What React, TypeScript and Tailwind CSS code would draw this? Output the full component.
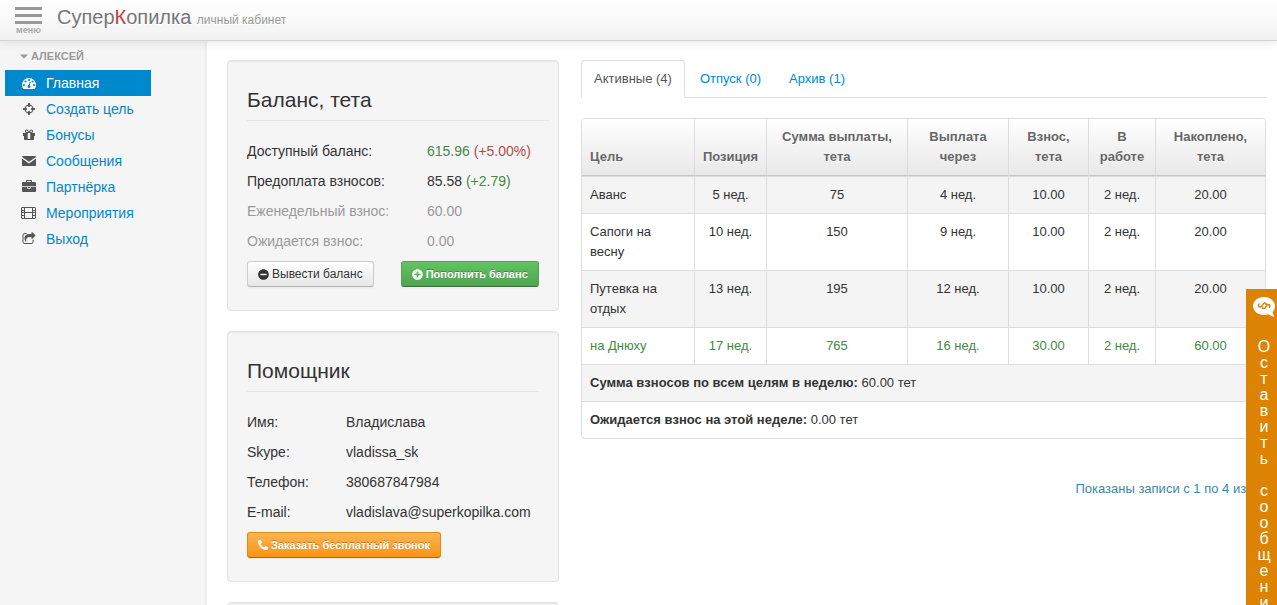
import type { ReactNode } from 'react'
import { FaCaretDown, FaMinusCircle, FaPhoneAlt, FaPlusCircle } from 'react-icons/fa'

interface Goal {
  name: string
  position: string
  payout: string
  payoutIn: string
  fee: string
  active: string
  saved: string
  done?: boolean
}

const GOALS: Goal[] = [
  { name: 'Аванс',            position: '5 нед.',  payout: '75',  payoutIn: '4 нед.',  fee: '10.00', active: '2 нед.', saved: '20.00' },
  { name: 'Сапоги на весну',  position: '10 нед.', payout: '150', payoutIn: '9 нед.',  fee: '10.00', active: '2 нед.', saved: '20.00' },
  { name: 'Путевка на отдых', position: '13 нед.', payout: '195', payoutIn: '12 нед.', fee: '10.00', active: '2 нед.', saved: '20.00' },
  { name: 'на Днюху',         position: '17 нед.', payout: '765', payoutIn: '16 нед.', fee: '30.00', active: '2 нед.', saved: '60.00', done: true },
]

const COLUMNS: { label: string; className: string }[] = [
  { label: 'Цель',                className: 'w-[112px] rounded-tl-[3px] text-left' },
  { label: 'Позиция',             className: 'w-[72px]' },
  { label: 'Сумма выплаты, тета', className: 'w-[141px]' },
  { label: 'Выплата через',       className: 'w-[101px]' },
  { label: 'Взнос, тета',         className: 'w-[80px]' },
  { label: 'В работе',            className: 'w-[67px]' },
  { label: 'Накоплено, тета',     className: 'w-[110px] rounded-tr-[3px]' },
]

const HELPER: [string, string][] = [
  ['Имя:', 'Владислава'],
  ['Skype:', 'vladissa_sk'],
  ['Телефон:', '380687847984'],
  ['E-mail:', 'vladislava@superkopilka.com'],
]

const GLYPHS = {
  dashboard: 'M384 1152q0-53-37.5-90.5t-90.5-37.5-90.5 37.5-37.5 90.5 37.5 90.5 90.5 37.5 90.5-37.5 37.5-90.5zm192-448q0-53-37.5-90.5t-90.5-37.5-90.5 37.5-37.5 90.5 37.5 90.5 90.5 37.5 90.5-37.5 37.5-90.5zm428 481l101-382q6-26-7.5-48.5t-38.5-29.5-48 6.5-30 39.5l-101 382q-60 5-107 43.5t-63 98.5q-20 77 20 146t117 89 146-20 89-117q16-60-6-117t-72-91zm660-33q0-53-37.5-90.5t-90.5-37.5-90.5 37.5-37.5 90.5 37.5 90.5 90.5 37.5 90.5-37.5 37.5-90.5zm-640-640q0-53-37.5-90.5t-90.5-37.5-90.5 37.5-37.5 90.5 37.5 90.5 90.5 37.5 90.5-37.5 37.5-90.5zm448 192q0-53-37.5-90.5t-90.5-37.5-90.5 37.5-37.5 90.5 37.5 90.5 90.5 37.5 90.5-37.5 37.5-90.5zm320 448q0 261-141 483-19 29-54 29h-1402q-35 0-54-29-141-221-141-483 0-182 71-348t191-286 286-191 348-71 348 71 286 191 191 286 71 348z',
  crosshairs: 'M1325 1024h-109q-26 0-45-19t-19-45v-128q0-26 19-45t45-19h109q-32-108-112.5-188.5t-188.5-112.5v109q0 26-19 45t-45 19h-128q-26 0-45-19t-19-45v-109q-108 32-188.5 112.5t-112.5 188.5h109q26 0 45 19t19 45v128q0 26-19 45t-45 19h-109q32 108 112.5 188.5t188.5 112.5v-109q0-26 19-45t45-19h128q26 0 45 19t19 45v109q108-32 188.5-112.5t112.5-188.5zm339-192v128q0 26-19 45t-45 19h-143q-37 161-154.5 278.5t-278.5 154.5v143q0 26-19 45t-45 19h-128q-26 0-45-19t-19-45v-143q-161-37-278.5-154.5t-154.5-278.5h-143q-26 0-45-19t-19-45v-128q0-26 19-45t45-19h143q37-161 154.5-278.5t278.5-154.5v-143q0-26 19-45t45-19h128q26 0 45 19t19 45v143q161 37 278.5 154.5t154.5 278.5h143q26 0 45 19t19 45z',
  gift: 'M1056 1356v-716h-320v716q0 25 18 38.5t46 13.5h192q28 0 46-13.5t18-38.5zm-456-844h195l-126-161q-26-31-69-31-40 0-68 28t-28 68 28 68 68 28zm688-96q0-40-28-68t-68-28q-43 0-69 31l-125 161h194q40 0 68-28t28-68zm376 256v320q0 14-9 23t-23 9h-96v416q0 40-28 68t-68 28h-1088q-40 0-68-28t-28-68v-416h-96q-14 0-23-9t-9-23v-320q0-14 9-23t23-9h440q-93 0-158.5-65.5t-65.5-158.5 65.5-158.5 158.5-65.5q107 0 168 77l128 165 128-165q61-77 168-77 93 0 158.5 65.5t65.5 158.5-65.5 158.5-158.5 65.5h440q14 0 23 9t9 23z',
  envelope: 'M128 256h1536q70 0 128 64v64l-896 620L0 384v-64q58-64 128-64zM0 580l896 624 896-624v892q-58 64-128 64H128q-70 0-128-64z',
  briefcase: 'M640 256h512v-128h-512v128zm1152 640v480q0 66-47 113t-113 47h-1472q-66 0-113-47t-47-113v-480h672v160q0 26 19 45t45 19h320q26 0 45-19t19-45v-160h672zm-768 0v128h-256v-128h256zm768-480v384h-1792v-384q0-66 47-113t113-47h352v-160q0-40 28-68t68-28h576q40 0 68 28t28 68v160h352q66 0 113 47t47 113z',
  share: 'M1472 989v259q0 119-84.5 203.5t-203.5 84.5h-832q-119 0-203.5-84.5t-84.5-203.5v-832q0-119 84.5-203.5t203.5-84.5h255q13 0 22.5 9.5t9.5 22.5q0 27-26 32-77 26-133 60-10 4-16 4h-112q-66 0-113 47t-47 113v832q0 66 47 113t113 47h832q66 0 113-47t47-113v-214q0-19 18-29 28-13 54-37 16-16 35-8 21 9 21 31zm237-496l-384 384q-18 19-45 19-12 0-25-5-39-17-39-59v-192h-160q-323 0-438 131-119 137-74 473 3 23-20 34-8 2-12 2-16 0-26-13-10-14-21-31t-39.5-68.5-49.5-99.5-38.5-114-17.5-122q0-49 3.5-91t14-90 28-88 47-81.5 68.5-74 94.5-61.5 124.5-48.5 159.5-30.5 196.5-11h160v-192q0-42 39-59 13-5 25-5 26 0 45 19l384 384q19 19 19 45t-19 45z',
}

function Glyph({ name }: { name: keyof typeof GLYPHS }) {
  return (
    <svg viewBox="0 0 1792 1792" className="h-[14px] w-[14px]" fill="currentColor" aria-hidden="true">
      <path d={GLYPHS[name]} />
    </svg>
  )
}

function FilmIcon() {
  return (
    <svg viewBox="0 0 16 14" className="h-[14px] w-4" fill="none" stroke="currentColor" aria-hidden="true">
      <rect x="0.5" y="1.5" width="14" height="11" rx="0.5" />
      <path d="M3.5 1v12M11.5 1v12M3.5 6.5h8M0 4.5h3.5M0 6.5h3.5M0 9.5h3.5M11.5 4.5H15M11.5 6.5H15M11.5 9.5H15" />
    </svg>
  )
}

// speech bubble with a dollar sign lying on its side
function ChatIcon() {
  return (
    <svg viewBox="0 0 22 20" className="h-5 w-[22px]" aria-hidden="true">
      <path d="M11 0C4.9 0 0 4 0 9s4.900 9 11 9c1.600 0 3.200-.3 4.600-.8 1.800 1.300 3.800 2.200 6.200 2.600-1.300-1.500-2-3-2.200-4.800C21.200 13.400 22 11.300 22 9c0-5-4.900-9-11-9z" fill="#fff" />
      <path d="M6.500 6.500C4.500 8 5.500 10.500 7.500 10c2-.5 2-3.500 4-4 1.500-.4 1.800 1 1.600 2.200M9.500 9.500c-.3 1.500.5 2.300 1.800 1.900 1.700-.6 1.600-3.300 3.500-3.900 1.800-.4 2.800 1.600 1.400 3.200" fill="none" stroke="#dc8303" strokeWidth="1.500" />
    </svg>
  )
}

const MENU: { label: string; icon: ReactNode; current?: boolean }[] = [
  { label: 'Главная',      icon: <Glyph name="dashboard" />, current: true },
  { label: 'Создать цель', icon: <Glyph name="crosshairs" /> },
  { label: 'Бонусы',       icon: <Glyph name="gift" /> },
  { label: 'Сообщения',    icon: <Glyph name="envelope" /> },
  { label: 'Партнёрка',    icon: <Glyph name="briefcase" /> },
  { label: 'Мероприятия',  icon: <FilmIcon /> },
  { label: 'Выход',        icon: <Glyph name="share" /> },
]

function Well({ children }: { children?: ReactNode }) {
  return (
    <section className="mb-5 min-h-5 rounded border border-[#e3e3e3] bg-[#f5f5f5] p-[19px] pb-[23px] shadow-[inset_0_1px_1px_rgba(0,0,0,0.05)]">
      {children}
    </section>
  )
}

function Header() {
  return (
    <header className="relative z-10 flex h-[41px] shrink-0 border-b border-[#d4d4d4] bg-linear-to-b from-white to-[#f2f2f2] pl-[15px] shadow-[0_1px_10px_rgba(0,0,0,0.1)]">
      <button type="button" className="flex w-[27px] flex-col items-center pt-[7px] text-[#999]">
        <span className="h-[3px] w-full bg-[#999]" />
        <span className="mt-1 h-[3px] w-full bg-[#999]" />
        <span className="mt-1 h-[3px] w-full bg-[#999]" />
        <span className="text-[9px] leading-[12px] font-bold text-[#aaa]">меню</span>
      </button>
      <a href="#" className="ml-[15px] pt-[7px] text-[20px] leading-5 text-[#777] [text-shadow:0_1px_0_#fff]">
        Супер<span className="text-[#c43c3c]">К</span>опилка <small className="text-[12px] text-[#999]">личный кабинет</small>
      </a>
    </header>
  )
}

function Sidebar() {
  return (
    <aside className="w-[207px] shrink-0 border-r-2 border-[#eee] bg-[#f5f5f5] pt-[5px] pl-[5px]">
      <h2 className="mb-1 flex h-5 items-center gap-px pl-[13px] text-[11px] leading-5 font-bold text-[#999] [text-shadow:0_1px_0_rgba(255,255,255,0.5)]">
        <FaCaretDown size={12} />АЛЕКСЕЙ
      </h2>
      <nav className="w-[146px]">
        {MENU.map(item => (
          <a
            key={item.label}
            href="#"
            className={`flex h-[26px] items-center pl-4 text-[14px] leading-5 ${item.current ? 'bg-[#0088cc] text-white' : 'text-[#0088cc]'}`}>
            <span className={`mr-[9px] flex w-4 justify-center ${item.current ? 'text-white' : 'text-[#555]'}`}>{item.icon}</span>
            {item.label}
          </a>
        ))}
      </nav>
    </aside>
  )
}

function BalanceCard() {
  return (
    <Well>
      <h3 className="-mr-[10px] mb-5 border-b border-[#e5e5e5] text-[21px] leading-10">Баланс, тета</h3>
      <dl className="grid grid-cols-[180px_1fr] gap-y-[10px] text-[14px] leading-5 whitespace-nowrap">
        <dt>Доступный баланс:</dt>
        <dd className="text-[#468847]">615.96 <span className="text-[#b94a48]">(+5.00%)</span></dd>
        <dt>Предоплата взносов:</dt>
        <dd>85.58 <span className="text-[#468847]">(+2.79)</span></dd>
        <dt className="text-[#999]">Еженедельный взнос:</dt>
        <dd className="text-[#999]">60.00</dd>
        <dt className="text-[#999]">Ожидается взнос:</dt>
        <dd className="text-[#999]">0.00</dd>
      </dl>
      <div className="mt-[10px] flex gap-[27px] leading-5 whitespace-nowrap">
        <button type="button" className="flex h-[26px] items-center gap-[3px] rounded-[3px] border border-[#ccc] border-b-[#b3b3b3] bg-linear-to-b from-white to-[#e6e6e6] px-[10px] text-[12px] shadow-[0_1px_2px_rgba(0,0,0,0.05)] [text-shadow:0_1px_1px_rgba(255,255,255,0.75)]">
          <FaMinusCircle size={11} />Вывести баланс
        </button>
        <button type="button" className="flex h-[26px] items-center gap-[3px] rounded-[3px] border border-[#51a351] border-b-[#387038] bg-linear-to-b from-[#62c462] to-[#51a351] px-[10px] text-[11px] font-bold text-white shadow-[0_1px_2px_rgba(0,0,0,0.05)] [text-shadow:0_-1px_0_rgba(0,0,0,0.25)]">
          <FaPlusCircle size={11} />Пополнить баланс
        </button>
      </div>
    </Well>
  )
}

function HelperCard() {
  return (
    <Well>
      <h3 className="mb-5 border-b border-[#e5e5e5] text-[21px] leading-10">Помощник</h3>
      <dl className="grid grid-cols-[99px_1fr] gap-y-[10px] text-[14px] leading-5 whitespace-nowrap">
        {HELPER.map(([label, value]) => (
          <div key={label} className="contents">
            <dt>{label}</dt>
            <dd>{value}</dd>
          </div>
        ))}
      </dl>
      <button type="button" className="mt-[10px] flex h-[26px] items-center gap-[3px] rounded-[3px] border border-[#e08a12] border-b-[#ad6704] bg-linear-to-b from-[#fbb450] to-[#f89406] px-[10px] text-[11px] leading-5 font-bold whitespace-nowrap text-white shadow-[0_1px_2px_rgba(0,0,0,0.05)] [text-shadow:0_-1px_0_rgba(0,0,0,0.25)]">
        <FaPhoneAlt size={10} className="-scale-x-100 rotate-90" />Заказать бесплатный звонок
      </button>
    </Well>
  )
}

function GoalsTable() {
  const cell = 'border-t border-l border-[#ddd] p-2 align-top first:border-l-0'
  return (
    <div className="mr-px rounded border border-[#ddd]">
      <table className="w-full table-fixed border-separate border-spacing-0 text-center text-[13px] leading-5">
        <thead>
          <tr>
            {COLUMNS.map(col => (
              <th
                key={col.label}
                className={`border-b border-l border-b-[#c8c8c8] border-l-[#ddd] bg-linear-to-b from-white to-[#e8e8e8] px-2 py-2 align-bottom font-bold text-[#666] [text-shadow:0_1px_0_#fff] first:border-l-0 ${col.className}`}>
                {col.label}
              </th>
            ))}
          </tr>
        </thead>
        <tbody>
          {GOALS.map(goal => (
            <tr key={goal.name} className={`odd:bg-[#f4f4f4] ${goal.done ? 'text-[#468847]' : ''}`}>
              <td className={`${cell} text-left`}>{goal.name}</td>
              <td className={cell}>{goal.position}</td>
              <td className={cell}>{goal.payout}</td>
              <td className={cell}>{goal.payoutIn}</td>
              <td className={cell}>{goal.fee}</td>
              <td className={cell}>{goal.active}</td>
              <td className={cell}>{goal.saved}</td>
            </tr>
          ))}
          <tr className="bg-[#f4f4f4] text-left">
            <td colSpan={7} className={cell}><strong>Сумма взносов по всем целям в неделю:</strong> 60.00 тет</td>
          </tr>
          <tr className="text-left">
            <td colSpan={7} className={cell}><strong>Ожидается взнос на этой неделе:</strong> 0.00 тет</td>
          </tr>
        </tbody>
      </table>
    </div>
  )
}

function FeedbackTab() {
  return (
    <button
      type="button"
      aria-label="Оставить сообщение"
      className="fixed top-[289px] right-0 z-20 flex w-[31px] flex-col items-center bg-[#dc8303] pt-2 pb-3 pl-[5px] text-[16px] leading-4 text-white">
      <ChatIcon />
      <span className="mt-[22px] flex flex-col items-center">
        {'Оставить сообщение'.split('').map((letter, i) => (
          <span key={i} className="h-4">{letter}</span>
        ))}
      </span>
    </button>
  )
}

export default function App() {
  return (
    <div className="flex h-screen flex-col overflow-hidden bg-white font-['Liberation_Sans',Arial,sans-serif] text-[#333]">
      <Header />
      <div className="flex min-h-0 flex-1">
        <Sidebar />
        <main className="grid min-w-0 flex-1 grid-cols-[332px_1fr] gap-[22px] overflow-hidden pt-[19px] pr-[10px] pl-5">
          <div>
            <BalanceCard />
            <HelperCard />
            <Well />
          </div>
          <div className="min-w-0">
            <nav className="mb-5 flex gap-[2px] border-b border-[#ddd] text-[13px] leading-5">
              <a href="#" className="-mb-px rounded-t border border-[#ddd] border-b-white bg-white px-3 py-2 text-[#555]">Активные (4)</a>
              <a href="#" className="-mb-px border border-transparent px-3 py-2 text-[#0088cc]">Отпуск (0)</a>
              <a href="#" className="-mb-px border border-transparent px-3 py-2 text-[#0088cc]">Архив (1)</a>
            </nav>
            <GoalsTable />
            <p className="mt-10 pr-[10px] text-right text-[13px] leading-5 text-[#3a87ad]">Показаны записи с 1 по 4 из 4</p>
          </div>
        </main>
      </div>
      <FeedbackTab />
    </div>
  )
}
